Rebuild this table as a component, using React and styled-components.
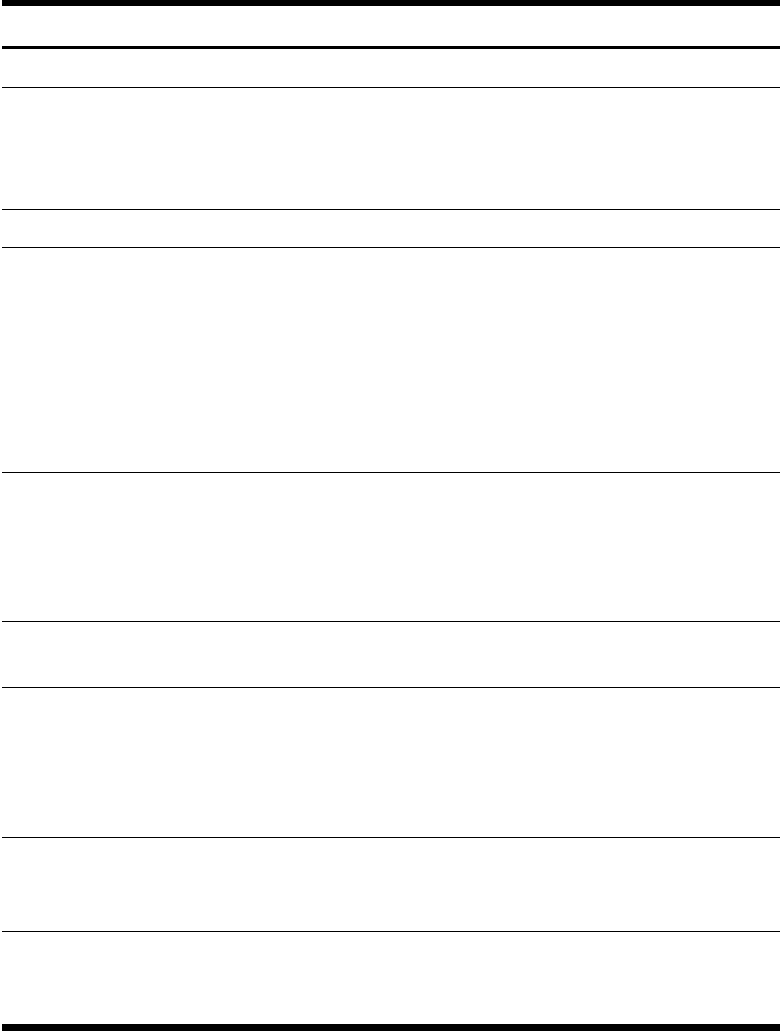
import styled, { createGlobalStyle } from "styled-components";

const Global = createGlobalStyle`
  html, body {
    margin: 0;
    padding: 0;
    background: #fff;
    overflow: hidden;
  }
  body {
    font-family: "Liberation Serif", serif;
  }
`;

const Page = styled.div`
  width: 780px;
  height: 1031px;
  padding-left: 2px;
  box-sizing: border-box;
  display: flex;
  flex-direction: column;
`;

const Rule = styled.div`
  height: ${(p) => p.$weight}px;
  background: #000;
  flex: none;
`;

const Row = styled.div`
  box-sizing: border-box;
  height: ${(p) => p.$h}px;
  flex: none;
  display: grid;
  grid-template-columns: 1fr 1fr 1fr;
  border-bottom: ${(p) => (p.$last ? "none" : `${p.$line || 1}px solid #000`)};
`;

const Cell = styled.div`
  font-size: 14px;
  color: #000;
`;

// heights of each body row, line included at the bottom
const rows = [39, 122, 38, 225, 149, 66, 150, 94];

function App() {
  return (
    <>
      <Global />
      <Page>
        <Rule $weight={6} />
        <Row $h={43} $line={3}>
          <Cell />
          <Cell />
          <Cell />
        </Row>
        {rows.map((h, i) => (
          <Row key={i} $h={h}>
            <Cell />
            <Cell />
            <Cell />
          </Row>
        ))}
        <Row $h={92} $last />
        <Rule $weight={7} />
      </Page>
    </>
  );
}

export default App;
